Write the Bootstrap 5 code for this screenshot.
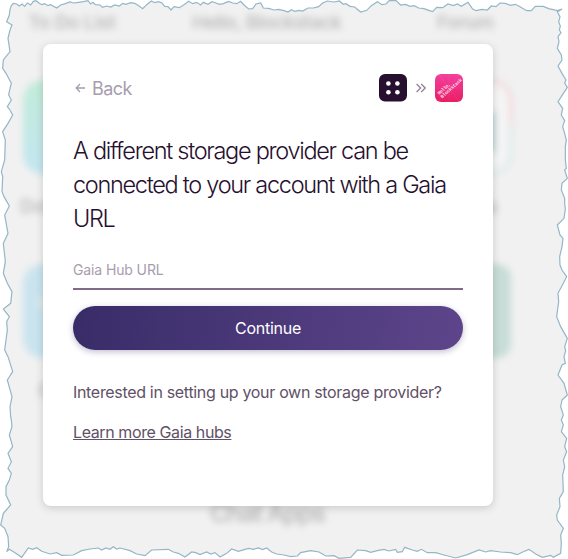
<!DOCTYPE html>
<html lang="en">
<head>
<meta charset="utf-8">
<meta name="viewport" content="width=device-width, initial-scale=1">
<title>Connect a storage provider</title>
<link href="https://cdn.jsdelivr.net/npm/bootstrap@5.3.0/dist/css/bootstrap.min.css" rel="stylesheet">
<style>
body{font-family:Inter,"Liberation Sans",sans-serif;background:#fff;color:#5f5167}
.stage{height:559px;padding:44px 75px 0 43px}
.backdrop-art{z-index:0}
.dialog-card{z-index:1;width:450px;height:462px;padding:30px;border:0;border-radius:8px;box-shadow:0 2px 8px rgba(0,0,0,.16)}
.top-row{height:28px}
.back-link{color:#a79dad;font-size:18px;line-height:28px;letter-spacing:-.55px;gap:6px}
.back-link span{padding-top:2px}
.back-link .arrow{margin-left:2px}
.app-row{gap:9px}
.title-text{color:#27102f;font-size:23.5px;font-weight:300;line-height:34px;letter-spacing:-1.3px;word-spacing:.1px;white-space:nowrap;margin:32px 0 0}
.hub-input{height:38px;margin-top:16px;padding:0 0 2px;border:0;border-bottom:2px solid #7f6a87;border-radius:0;font-size:14px;letter-spacing:-.12px;color:#5f5167;background:none}
.hub-input::placeholder{color:#a79dad;opacity:1}
.go-btn{height:44px;margin-top:16px;padding:0;border:0;color:#fff;font-size:16px;letter-spacing:-.25px;background:linear-gradient(100deg,#382c68,#5e458b);box-shadow:0 2px 6px rgba(56,44,104,.3)}
.note{font-size:16px;line-height:24px;letter-spacing:-.32px;white-space:nowrap;margin:30px 0 0}
.more{font-size:16px;line-height:24px;letter-spacing:-.4px;margin:16px 0 0}
.more a{color:#5f5167}
</style>
<script src="https://cdn.jsdelivr.net/npm/bootstrap@5.3.0/dist/js/bootstrap.bundle.min.js"></script>
</head>
<body class="overflow-hidden">
<main class="stage position-relative">
<svg class="backdrop-art position-absolute top-0 start-0" width="568" height="559" viewBox="0 0 568 559" aria-hidden="true">
<defs>
<filter id="soft" x="-20%" y="-50%" width="140%" height="200%"><feGaussianBlur stdDeviation="3.8"/></filter>
<linearGradient id="mint" x1="0" y1="0" x2="0" y2="1"><stop stop-color="#c2ebd9"/><stop offset="1" stop-color="#c3e6f0"/></linearGradient>
<path id="torn" transform="scale(.333333)" d="M30 28L34 17 40 10 50 12 58 18 66 12 74 19 82 9 92 15 100 4 108 2 118 10 126 14 134 11 144 17 152 14 170 24 182 15 196 11 210 6 220 9 236 7 250 5 264 2 272 12 279 7 286 14 300 15 308 22 320 18 332 21 344 15 358 18 368 10 378 13 392 8 404 10 414 16 428 26 440 14 454 3 464 8 476 5 486 9 494 19 504 20 513 30 522 20 538 23 552 14 566 4 578 11 590 7 602 15 610 7 624 13 636 5 648 9 658 13 670 11 686 4 698 9 710 11 722 4 732 15 746 27 758 26 768 12 782 9 790 24 806 25 822 30 836 28 852 32 864 36 874 29 884 34 898 31 908 33 924 24 940 24 956 20 968 9 982 3 1002 6 1018 3 1030 13 1038 11 1050 19 1064 21 1082 36 1100 31 1114 17 1132 5 1146 14 1158 12 1168 2 1188 2 1202 15 1216 13 1230 19 1242 17 1256 24 1272 26 1286 31 1298 35 1310 22 1328 23 1344 12 1360 17 1372 12 1384 19 1404 7 1418 27 1428 32 1446 28 1462 30 1474 18 1488 20 1500 9 1516 10 1532 16 1546 13 1560 20 1580 32 1594 32 1606 19 1630 19 1646 26 1672 32 1686 27 1672 36
L1680 50 1676 66 1681 78 1678 90 1683 98 1674 110 1677 125 1672 145 1684 165 1686 180 1674 198 1686 220 1698 240 1694 249 1702 262 1690 280 1674 305 1688 325 1684 345 1694 362 1688 380 1694 400 1699 420 1696 440 1696 480 1699 505 1694 510 1702 535 1686 550 1684 570 1694 595 1694 610 1696 627 1692 655 1672 675 1680 705 1689 715 1686 740 1679 770 1680 795 1686 810 1700 830 1690 850 1674 880 1676 905 1670 950 1682 980 1702 1015 1694 1040 1697 1052 1692 1070 1696 1090 1686 1095 1674 1125 1692 1150 1702 1185 1686 1200 1682 1220 1690 1245
L1684 1260 1690 1275 1684 1295 1700 1315 1694 1340 1700 1355 1690 1380 1694 1400 1688 1425 1690 1475 1678 1495 1680 1520 1670 1545 1672 1560 1690 1585 1682 1605 1684 1630 1682 1660
L1660 1672 1652 1666 1627 1672 1607 1662 1587 1648 1568 1656 1552 1664 1532 1658 1502 1656 1472 1652 1457 1656 1437 1650 1402 1664 1367 1674 1332 1665 1307 1658 1282 1658 1264 1648 1252 1654 1237 1650 1214 1642 1207 1655 1192 1657 1187 1648 1167 1653 1152 1648 1132 1652 1112 1657 1097 1652 1072 1650 1052 1672 1017 1675 1002 1667 977 1668 957 1656 932 1652 902 1658 892 1668 872 1670 852 1665
L830 1662 815 1656 800 1644 788 1649 775 1644 760 1648 746 1645 735 1648 715 1654 695 1647 680 1660 660 1671 645 1658 632 1662 620 1656 600 1664 587 1658 575 1656 555 1671 535 1660 520 1656 505 1648 455 1650 435 1667 410 1662 390 1652 360 1644 350 1647 340 1640 330 1648 318 1644 305 1650 295 1644 270 1647 245 1652 220 1665 185 1666 170 1658 150 1662 125 1654 110 1643 98 1648 85 1644 65 1672 45 1658 28 1648
L20 1655 26 1640 24 1610 14 1585 2 1575 10 1540 32 1515 18 1485 18 1460 28 1440 34 1420 24 1405 34 1385 24 1360 38 1340 28 1305 36 1280 34 1260 32 1250 30 1220 36 1190 22 1140 38 1115 24 1070 14 1050 22 990 20 965 28 950 10 927 32 910 36 875 22 850 10 820 16 785 10 730 24 700 14 645 28 618 12 590 6 575 8 530 4 515 14 480 16 420
L8 395 24 370 38 345 30 330 22 320 34 300 26 285 30 265 34 250 18 220 8 205 10 180 30 155 24 115 30 90 36 75 20 65 28 45Z"/>
<clipPath id="tornClip"><use href="#torn"/></clipPath>
</defs>
<g clip-path="url(#tornClip)">
<rect width="568" height="559" fill="#f1f1f1"/>
<g filter="url(#soft)">
<rect x="23" y="80" width="94" height="94" rx="20" fill="url(#mint)"/>
<rect x="23" y="264" width="94" height="94" rx="20" fill="#c9e4ef"/>
<path d="M43 295v16l-6-8z" fill="#f0ebe8"/>
<rect x="418" y="81" width="93" height="92" rx="20" fill="#f4f5f4"/>
<path d="M480 81h11a20 20 0 0 1 20 20v25" fill="none" stroke="#f2d8dc" stroke-width="4"/>
<path d="M511 126v27a20 20 0 0 1-20 20h-11" fill="none" stroke="#dce9ea" stroke-width="4"/>
<rect x="440" y="112" width="55" height="40" fill="#b9d4d4"/>
<rect x="418" y="264" width="93" height="94" rx="14" fill="#c8ddd7"/>
</g>
<g filter="url(#soft)" fill="#bcbcbc" font-size="19" font-weight="600" font-family="Inter,sans-serif">
<text x="28" y="29" textLength="88">To Do List</text>
<text x="192" y="29" textLength="150">Hello, Blockstack</text>
<text x="437" y="29" textLength="57">Forum</text>
<text x="20" y="213">Dots</text>
<text x="38" y="397">Cal</text>
<text x="455" y="213" textLength="43">Tasks</text>
<text x="210" y="522" font-size="25" textLength="116">Chat Apps</text>
</g>
</g>
<use href="#torn" fill="none" stroke="#94b6c7" stroke-width="3.6"/>
</svg>
<section class="card dialog-card position-relative">
<div class="top-row d-flex align-items-center justify-content-between">
<a class="back-link d-flex align-items-center text-decoration-none" href="#">
<svg class="arrow" width="11" height="10" viewBox="0 0 11 10" fill="none" stroke="currentColor" stroke-width="1.3"><path d="M10 5H1.5M5 1L1.2 5 5 9"/></svg>
<span>Back</span></a>
<div class="app-row d-flex align-items-center">
<svg width="28" height="28" viewBox="0 0 28 28"><rect width="28" height="27.5" rx="6" fill="#27102f"/><g fill="#fff"><circle cx="9.4" cy="9.5" r="2.3"/><circle cx="18.4" cy="9.5" r="2.3"/><circle cx="9.4" cy="18.2" r="2.3"/><circle cx="18.4" cy="18.2" r="2.3"/></g></svg>
<svg width="10" height="10" viewBox="0 0 10 10" fill="none" stroke="#93869a" stroke-width="1.4"><path d="M.6 1l4 4-4 4M5.2 1l4 4-4 4"/></svg>
<svg width="28" height="28" viewBox="0 0 28 28"><defs><linearGradient id="pink" x1="0" y1="0" x2="0" y2="1"><stop stop-color="#f33f9e"/><stop offset="1" stop-color="#e91e63"/></linearGradient></defs><rect width="28" height="28" rx="6" fill="url(#pink)"/><path d="M4 1l20 26M24 1L4 27M0 14h28M14 0v28" stroke="#fff" stroke-opacity=".1" stroke-width=".6"/><g fill="#ffd9ea" font-family="'Liberation Mono',monospace" font-weight="700" font-size="4.9" transform="translate(4.3 21) rotate(-42)"><text x="0" y="0" textLength="15.5">Hello,</text><text x="0" y="4.6" textLength="27">Blockstack</text></g></svg>
</div>
</div>
<h1 class="title-text">A different storage provider can be<br>connected to your account with a Gaia<br>URL</h1>
<input class="form-control hub-input" type="text" placeholder="Gaia Hub URL" aria-label="Gaia Hub URL">
<button class="btn go-btn rounded-pill w-100" type="button">Continue</button>
<p class="note">Interested in setting up your own storage provider?</p>
<p class="more"><a href="#">Learn more Gaia hubs</a></p>
</section>
</main>
</body>
</html>
